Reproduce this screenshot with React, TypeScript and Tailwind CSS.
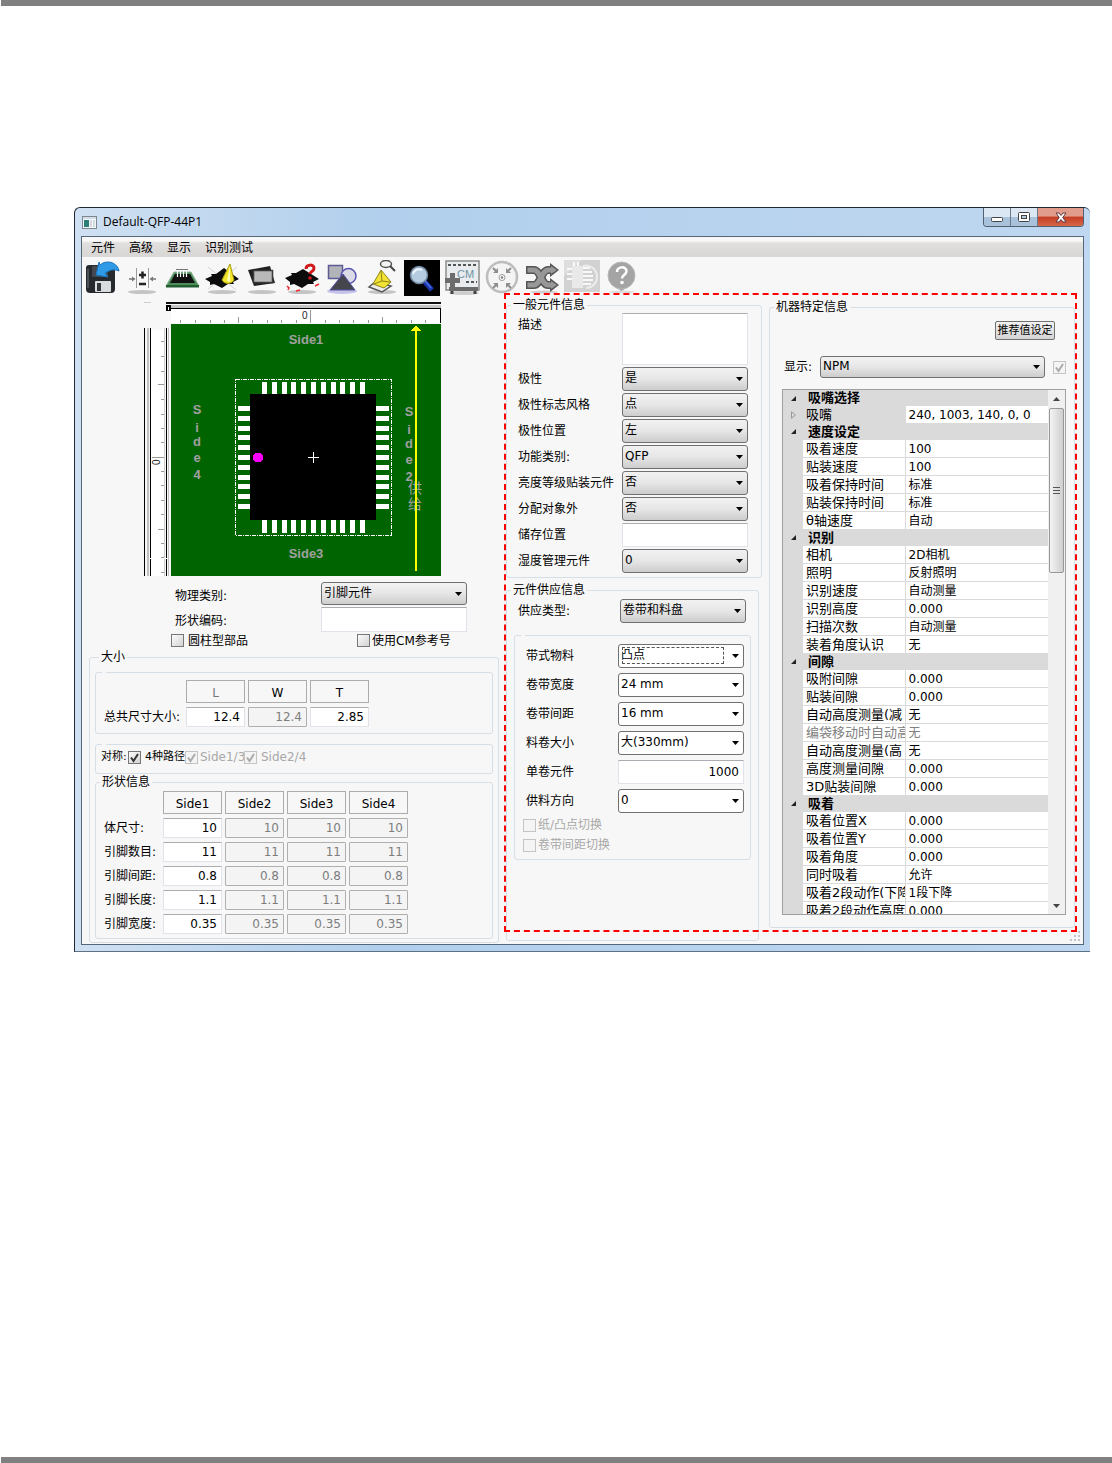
import React from "react";

const FIELD =
  "block border border-t-[#abadb3] border-[#e2e3ea] bg-white outline-none";

function Shadow() {
  return <ellipse cx="18" cy="32" rx="14" ry="2" fill="#c4c4c4" />;
}

const icons: { name: string; art: React.ReactNode }[] = [
  {
    name: "保存",
    art: (
      <>
        <path d="M5 5h22l4 4v20a4 4 0 0 1-4 4H6a4 4 0 0 1-4-4V8a3 3 0 0 1 3-3z" fill="#26292d" />
        <path d="M4 9v19" stroke="#5b6068" strokeWidth="1.5" />
        <rect x="8" y="6" width="16" height="11" rx="1" fill="#45494f" />
        <rect x="11" y="21" width="16" height="11" rx="1" fill="#d9dcdf" />
        <rect x="13" y="23" width="4" height="8" fill="#33373b" />
        <path d="M35 11C34 4 26 0 19 3l-3 2-1-3-3 13 12 2-3-4 4-2c4-2 7-1 10 0z" fill="#2f9be6" stroke="#1874bd" />
      </>
    ),
  },
  {
    name: "尺寸调整",
    art: (
      <>
        <Shadow />
        <path d="M12.5 8v20M24.5 8v20" stroke="#9a9a9a" />
        <path d="M18.500 11.500v7M15 15h7M15 24h7" stroke="#222" strokeWidth="2.500" />
        <path d="M5 19h4M32 19h-4" stroke="#777" strokeWidth="1.500" />
        <path d="M8 16.500l3.500 2.500L8 21.500zM29 16.500L25.500 19l3.500 2.500z" fill="#777" />
      </>
    ),
  },
  {
    name: "基板",
    art: (
      <>
        <path d="M10 12h17l8 14H2z" fill="#4d8f5b" stroke="#8fb596" />
        <path d="M11 14h15l5 9H6z" fill="#111" />
        <path d="M13.500 9v8M16.500 9v8M19.500 9v8M22.500 9v8" stroke="#fff" strokeWidth="1.200" />
        <path d="M12 9.500h12" stroke="#777" />
        <path d="M2 25h33v2.500H2z" fill="#235e31" />
      </>
    ),
  },
  {
    name: "照明",
    art: (
      <>
        <Shadow />
        <path d="M4 7l28 23M33 7L4 29" stroke="#d4d4d4" />
        <path d="M1 19l7-3-1-2 5 0 8-6 15 11-6 3 1 2-6 0-6 4-8-4-4 1 0-3z" fill="#0c0c0c" />
        <path d="M26 4l-8 16c2 4 9 5 12 0z" fill="#f3e52e" stroke="#a99d12" />
        <path d="M26 6l-3 15 3 1z" fill="#fffbbd" />
      </>
    ),
  },
  {
    name: "视图",
    art: (
      <>
        <Shadow />
        <path d="M4 10l22-4 5 17-21 3z" fill="#202020" />
        <path d="M9.500 10.500h19v12h-19z" fill="#b9b9b9" stroke="#3a3a3a" strokeWidth="1.500" />
      </>
    ),
  },
  {
    name: "查询",
    art: (
      <>
        <Shadow />
        <path d="M1 18l7-3-1-2 5 0 7-4 16 10-6 3 1 2-6 0-6 4-8-4-4 1 0-3z" fill="#0c0c0c" />
        <path d="M22 9c0-5 8-5 8-1 0 4-4 3-4 6" stroke="#d01818" strokeWidth="3" fill="none" />
        <circle cx="26" cy="18" r="1.800" fill="#d01818" />
        <path d="M3 26l2 2-1 2M12 31l4-1M31 26l4-2" stroke="#ee2a2a" strokeWidth="1.500" fill="none" />
      </>
    ),
  },
  {
    name: "形状",
    art: (
      <>
        <ellipse cx="18" cy="31" rx="15" ry="3" fill="#c6c3ea" />
        <rect x="4.500" y="5.500" width="14" height="13" fill="#b3b4ba" stroke="#5c5a90" strokeWidth="1.500" />
        <circle cx="24.500" cy="16" r="7.500" fill="#dadbe6" stroke="#5b56b4" strokeWidth="1.500" />
        <path d="M19 14L6 30h25z" fill="#45464d" stroke="#5550a8" />
      </>
    ),
  },
  {
    name: "检查视野",
    art: (
      <>
        <Shadow />
        <path d="M5 27l6-5 16 4-9 6z" fill="#ececec" stroke="#555" strokeWidth="1.500" />
        <path d="M17 10l10 12-7 6-11-4z" fill="#f2e335" stroke="#8e8418" />
        <path d="M17 11l1 10-8 3M18 21l8 1" fill="none" stroke="#8e8418" />
        <ellipse cx="22" cy="4" rx="5.500" ry="3.500" fill="#f4f4f4" stroke="#555" strokeWidth="1.500" />
        <path d="M26 6l5 5" stroke="#444" strokeWidth="2" />
      </>
    ),
  },
  {
    name: "放大镜",
    art: (
      <>
        <rect width="36" height="36" fill="#000" />
        <path d="M20 21l8 9" stroke="#1a34a8" strokeWidth="5" />
        <path d="M21 21l6 7" stroke="#4f74e6" strokeWidth="1.500" />
        <circle cx="15" cy="15" r="8.500" fill="#b5cbe0" stroke="#70849c" strokeWidth="1.500" />
        <path d="M9 14c1-4 5-6 9-4" stroke="#eaf4fc" strokeWidth="2" fill="none" />
      </>
    ),
  },
  {
    name: "CM元件",
    art: (
      <>
        <ellipse cx="20" cy="33" rx="15" ry="2" fill="#cfcfcf" />
        <path d="M2 1h33v29H2z" fill="#e9ecee" stroke="#8c8c8c" strokeWidth="1.500" />
        <path d="M4 5h29M22 22h11" stroke="#555" strokeWidth="2" strokeDasharray="3 2" />
        <path d="M5 27h29v4H5z" fill="#6b6b6b" />
        <path d="M8 31v3M31 31v3" stroke="#444" strokeWidth="3" />
        <text x="13" y="18" fontSize="11" fill="#6f92a8" fontFamily="Liberation Sans">CM</text>
        <path d="M8.500 13v16M1 20.500h15" stroke="#6d6d6d" strokeWidth="5" />
      </>
    ),
  },
  {
    name: "居中",
    art: (
      <>
        <circle cx="18" cy="17" r="15" fill="#f4f4f4" stroke="#bdbdbd" strokeWidth="2.500" />
        <circle cx="18" cy="17.500" r="3" fill="#fff" stroke="#999" />
        <circle cx="18" cy="17.500" r="1.200" fill="#777" />
        <path d="M9 8l4 4M27 8l-4 4M9 28l4-4M27 28l-4-4" stroke="#8d8d8d" strokeWidth="2" />
        <path d="M14 8v5H9zM22 8v5h5zM14 28v-5H9zM22 28v-5h5z" fill="#8d8d8d" />
      </>
    ),
  },
  {
    name: "交换",
    art: (
      <>
        <ellipse cx="20" cy="32" rx="14" ry="1.500" fill="#cfcfcf" />
        <path d="M2 10h8c6 0 8 15 14 15h4M2 25h8c6 0 8-15 14-15h4" stroke="#555" strokeWidth="8" fill="none" />
        <path d="M26 3l9 7-9 7zM26 18l9 7-9 7z" fill="#555" />
        <path d="M3.500 10H10c6 0 8 15 14 15h4M3.500 25H10c6 0 8-15 14-15h4" stroke="#989898" strokeWidth="5" fill="none" />
        <path d="M27 6l6 4-6 4zM27 21l6 4-6 4z" fill="#989898" />
      </>
    ),
  },
  {
    name: "元件编辑",
    art: (
      <>
        <rect width="36" height="32" fill="#d2d2d2" />
        <path d="M0 0h18L0 16z" fill="#dedede" />
        <path d="M19 6a11 11 0 0 1 14 11c0 6-5 11-11 11" fill="none" stroke="#ececec" strokeWidth="2" />
        <path d="M8 6h11v22H8z" fill="#e9e9e9" />
        <path d="M3 9h5M3 14h5M3 19h5M10 2v4M14 2v4" stroke="#f8f8f8" strokeWidth="2" />
        <path d="M19 8h7M19 12h9M19 16h10M19 20h10M19 24h8" stroke="#f8f8f8" strokeWidth="2" />
      </>
    ),
  },
  {
    name: "帮助",
    art: (
      <>
        <ellipse cx="18" cy="32" rx="13" ry="1.500" fill="#dcdcdc" />
        <path d="M17.500 31l-5-3h10z" fill="#a4a4a4" />
        <circle cx="17.500" cy="15.500" r="13.500" fill="#a4a4a4" stroke="#b9b9b9" />
        <path d="M13 12c0-6 9.500-6 9.500-1 0 4-4.500 4-4.500 7.500" stroke="#fff" strokeWidth="2.500" fill="none" />
        <circle cx="18" cy="22.500" r="1.800" fill="#fff" />
      </>
    ),
  },
];

const hTicks = [180, 195, 210, 224, 238, 252, 267, 281, 296, 310, 325, 339, 353, 368, 382, 396, 411, 425];
const vTicks = [341, 356, 371, 384, 399, 414, 428, 442, 457, 471, 485, 500, 514, 529, 543, 557, 572];
const pins = Array.from({ length: 11 }, (_, i) => Math.round(i * 9.8));
const sideLetterRows = [0, 18, 32, 48, 65];

function Preview() {
  return (
    <svg
      viewBox="144 302 297 274"
      className="ml-[55px] block h-[274px] w-[297px]"
      role="img"
      aria-label="元件外形"
      shapeRendering="crispEdges"
    >
      <path d="M144 302h7v1h-7z" fill="#ccc" />
      <path d="M166 302h275v2H166z" fill="#111" />
      <path d="M166 305h275v3H166z" fill="#c4c4c4" />
      <path d="M166 305h5v6h-5z" fill="#000" />
      <path d="M168 307h1v3h-1z" fill="#fff" />
      <path d="M171 308h270v15H171z" fill="#000" />
      <path d="M171 309h269v14H171z" fill="#fff" />
      {hTicks.map((x, i) => (
        <path
          key={x}
          d={`M${x}.5 ${i === 9 ? 310 : i === 4 || i === 14 ? 317 : 320}V323`}
          stroke="#999"
        />
      ))}
      <text x="302" y="319" fontSize="10" fill="#222" fontFamily="Liberation Sans">0</text>
      <path d="M144 328h1v248h-1zM150 328h1v248h-1zM166 328h1v248h-1z" fill="#000" />
      <path d="M147 328h2v248h-2zM168 328h1v248h-1z" fill="#c0c0c0" />
      <path d="M151 330h13v246h-13z" fill="#fff" />
      <path d="M164 328h1v248h-1z" fill="#ccc" />
      <path d="M150 558h17v1h-17z" fill="#fff" />
      {vTicks.map((y, i) => (
        <path
          key={y}
          d={`M${i === 8 ? 152 : i === 3 || i === 13 ? 158 : 161} ${y}.5H164`}
          stroke="#999"
        />
      ))}
      <text x="0" y="0" fontSize="10" fill="#222" fontFamily="Liberation Sans" transform="translate(160 465) rotate(-90)">0</text>
      <rect x="171" y="324" width="270" height="252" fill="#006400" />
      <rect x="235.500" y="379.500" width="156" height="156" fill="none" stroke="#fff" strokeDasharray="4 1 1 1" />
      {pins.map((p) => (
        <g key={p} fill="#fff">
          <rect x={262 + p} y="382" width="5" height="13" />
          <rect x={262 + p} y="519" width="5" height="14" />
          <rect x="238" y={406 + p} width="13" height="5" />
          <rect x="375" y={406 + p} width="14" height="5" />
        </g>
      ))}
      <rect x="250" y="394" width="126" height="126" />
      <circle cx="258" cy="457.500" r="5" fill="#f0f" />
      <path d="M313.500 452v11M308 457.500h11" stroke="#fff" />
      <g fill="#a0a0a0" fontSize="13" fontWeight="700" fontFamily="Liberation Sans" textAnchor="middle">
        <text x="306" y="344">Side1</text>
        <text x="306" y="558">Side3</text>
        {["S", "i", "d", "e", "4"].map((c, i) => (
          <text key={c} x="197" y={414 + sideLetterRows[i]}>{c}</text>
        ))}
        {["S", "i", "d", "e", "2"].map((c, i) => (
          <text key={c} x="409" y={416 + sideLetterRows[i]}>{c}</text>
        ))}
      </g>
      <g fill="#a0a0a0" fontSize="14" fontFamily="Noto Sans CJK SC, sans-serif">
        <text x="408" y="493">供</text>
        <text x="408" y="509">给</text>
      </g>
      <path d="M415 330h2v241h-2zM416 325l5 6h-10z" fill="#ff0" />
    </svg>
  );
}

function Group({ title, className, children }: { title?: string; className?: string; children: React.ReactNode }) {
  return (
    <fieldset className={`min-w-0 rounded-[3px] border border-[#d5dfe5] ${className ?? ""}`}>
      {title ? (
        <legend className="ml-1 px-0.5 text-xs leading-4">{title}</legend>
      ) : (
        <legend className="ml-1.5 h-px w-1" />
      )}
      {children}
    </fieldset>
  );
}

function Select({
  id,
  value,
  light,
  focused,
  className,
}: {
  id: string;
  value: string;
  light?: boolean;
  focused?: boolean;
  className: string;
}) {
  return (
    <div className={`relative ${className}`}>
      <select
        id={id}
        className={`block h-full w-full appearance-none rounded-[3px] border border-[#707070] pb-0.5 pl-0.5 text-xs leading-4 outline-none ${
          light ? "bg-white" : "bg-linear-to-b from-[#f2f2f2] via-[#e6e6e6] to-[#cdcdcd]"
        }`}
      >
        <option>{value}</option>
      </select>
      {focused && (
        <span className="pointer-events-none absolute top-[3px] right-5 bottom-1 left-1 border border-dashed border-[#555]" />
      )}
      <svg viewBox="0 0 7 4" className="pointer-events-none absolute inset-y-0 right-[5px] my-auto h-1 w-[7px]">
        <path d="M0 0h7L3.500 4z" />
      </svg>
    </div>
  );
}

function Check({
  id,
  label,
  checked,
  disabled,
  gap,
  small,
}: {
  id: string;
  label: string;
  checked?: boolean;
  disabled?: boolean;
  gap?: boolean;
  small?: boolean;
}) {
  return (
    <span className="flex items-center">
      <span className="relative block size-[13px] shrink-0">
        <input
          id={id}
          type="checkbox"
          aria-label={label || "启用"}
          defaultChecked={checked}
          disabled={disabled}
          className="block size-[13px] appearance-none border border-[#777] bg-linear-to-br from-[#fdfdfd] to-[#d2d2d2] disabled:border-[#c4c4c4] disabled:bg-[#f4f4f4] disabled:bg-none"
        />
        {checked && (
          <svg viewBox="0 0 13 13" className="pointer-events-none absolute inset-0 size-[13px]">
            <path d="M3 6.500l2.500 3.500L10 3" fill="none" strokeWidth="2" stroke={disabled ? "#aaa" : "#333"} />
          </svg>
        )}
      </span>
      {label && (
        <label
          htmlFor={id}
          className={`${gap ? "ml-1" : "ml-0.5"} ${small ? "text-[11px]" : ""} whitespace-nowrap ${disabled ? "text-[#a8a8a8]" : ""}`}
        >
          {label}
        </label>
      )}
    </span>
  );
}

function NumberCell({ value, disabled, label }: { value: string; disabled?: boolean; label: string }) {
  return (
    <td className="p-0">
      <input
        aria-label={label}
        defaultValue={value}
        disabled={disabled}
        className={`${FIELD} h-5 w-[59px] pr-1 text-right text-xs disabled:rounded-[1px] disabled:border-[#afafaf] disabled:bg-[#f4f4f4] disabled:text-[#7d7d7d]`}
      />
    </td>
  );
}

function HeadCell({ text, muted }: { text: string; muted?: boolean }) {
  return (
    <th scope="col" className="p-0 font-normal">
      <div className={`h-[23px] w-[59px] border border-[#acacac] leading-6 ${muted ? "text-[#777]" : ""}`}>{text}</div>
    </th>
  );
}

const shapeRows = [
  ["体尺寸:", "10"],
  ["引脚数目:", "11"],
  ["引脚间距:", "0.8"],
  ["引脚长度:", "1.1"],
  ["引脚宽度:", "0.35"],
];
const sides = ["Side1", "Side2", "Side3", "Side4"];

function LeftColumn() {
  return (
    <div className="w-[422px] shrink-0 pt-[5px] pr-[5px] pb-px pl-[7px]">
      <Preview />
      <div className="mt-1.5 ml-[86px] grid grid-cols-[146px_146px] items-center gap-y-0.5">
        <label htmlFor="phys" className="pt-1">物理类别:</label>
        <Select id="phys" value="引脚元件" className="h-[23px]" />
        <label htmlFor="code" className="pt-0.5">形状编码:</label>
        <input id="code" className={`${FIELD} h-[25px] w-full`} />
      </div>
      <div className="ml-[82px] grid h-[17px] grid-cols-[186px_auto] items-center">
        <Check id="cyl" label="圆柱型部品" gap />
        <Check id="cm" label="使用CM参考号" />
      </div>
      <Group title="大小" className="px-[5px] pb-[3px]">
        <Group className="mt-[7px] pb-0.5">
          <table className="border-separate border-spacing-x-[3px] border-spacing-y-1 pt-[3px]">
            <thead>
              <tr>
                <td />
                <HeadCell text="L" muted />
                <HeadCell text="W" />
                <HeadCell text="T" />
              </tr>
            </thead>
            <tbody>
              <tr>
                <th scope="row" className="w-[84px] p-0 pl-[5px] text-left font-normal whitespace-nowrap">总共尺寸大小:</th>
                <NumberCell label="L" value="12.4" />
                <NumberCell label="W" value="12.4" disabled />
                <NumberCell label="T" value="2.85" />
              </tr>
            </tbody>
          </table>
        </Group>
        <Group className="mt-2.5">
          <div className="flex h-7 items-center pb-1 pl-[5px]">
            <span className="w-[27px] shrink-0 text-[11px] whitespace-nowrap">对称:</span>
            <span className="w-[57px]"><Check id="p4" label="4种路径" checked gap small /></span>
            <span className="w-[59px]"><Check id="s13" label="Side1/3" checked disabled /></span>
            <Check id="s24" label="Side2/4" checked disabled gap />
          </div>
        </Group>
        <Group title="形状信息">
          <table className="-mt-[3px] border-separate border-spacing-x-[3px] border-spacing-y-1">
            <thead>
              <tr>
                <td />
                {sides.map((s) => <HeadCell key={s} text={s} />)}
              </tr>
            </thead>
            <tbody>
              {shapeRows.map(([name, value]) => (
                <tr key={name}>
                  <th scope="row" className="w-[61px] p-0 pl-[5px] text-left font-normal whitespace-nowrap">{name}</th>
                  {sides.map((s, i) => (
                    <NumberCell key={s} label={name + s} value={value} disabled={i > 0} />
                  ))}
                </tr>
              ))}
            </tbody>
          </table>
        </Group>
      </Group>
    </div>
  );
}

const general = [
  ["极性", "是"],
  ["极性标志风格", "点"],
  ["极性位置", "左"],
  ["功能类别:", "QFP"],
  ["亮度等级贴装元件", "否"],
  ["分配对象外", "否"],
  ["储存位置", null],
  ["湿度管理元件", "0"],
] as const;

function MiddleColumn() {
  return (
    <div className="w-64 shrink-0">
      <Group title="一般元件信息" className="pb-1">
        <div className="grid grid-cols-[104px_126px] items-center gap-y-0.5 pl-[11px]">
          <label htmlFor="desc" className="self-start pt-1">描述</label>
          <textarea id="desc" className={`${FIELD} h-[52px] w-full resize-none`} />
          {general.map(([name, value]) => (
            <React.Fragment key={name}>
              <label htmlFor={name} className="whitespace-nowrap">{name}</label>
              {value === null ? (
                <input id={name} className={`${FIELD} h-6 w-full`} />
              ) : (
                <Select id={name} value={value} className="h-6" />
              )}
            </React.Fragment>
          ))}
        </div>
      </Group>
      <Group title="元件供应信息" className="mt-1 mr-[3px] h-[359px]">
        <div className="grid grid-cols-[102px_126px] items-center pt-px pl-[11px]">
          <label htmlFor="supply">供应类型:</label>
          <Select id="supply" value="卷带和料盘" className="h-6" />
        </div>
        <Group className="mt-3 mr-[7px] ml-[7px] pb-1">
          <div className="grid grid-cols-[92px_126px] items-center gap-y-[5px] pt-2 pl-[11px]">
            <label htmlFor="tape">带式物料</label>
            <Select id="tape" value="凸点" light focused className="h-6" />
            <label htmlFor="tapew">卷带宽度</label>
            <Select id="tapew" value="24 mm" light className="h-6" />
            <label htmlFor="tapep">卷带间距</label>
            <Select id="tapep" value="16 mm" light className="h-6" />
            <label htmlFor="reel">料卷大小</label>
            <Select id="reel" value="大(330mm)" light className="h-6" />
            <label htmlFor="parts">单卷元件</label>
            <input id="parts" defaultValue="1000" className={`${FIELD} h-6 w-full pr-1 text-right`} />
            <label htmlFor="dir">供料方向</label>
            <Select id="dir" value="0" light className="h-6" />
          </div>
          <div className="grid auto-rows-[20px] items-center pt-0.5 pl-2">
            <Check id="paper" label="纸/凸点切换" disabled />
            <Check id="pitch" label="卷带间距切换" disabled />
          </div>
        </Group>
      </Group>
    </div>
  );
}

type Row = [string, string?, ("muted" | "closed")?];
const rows: Row[] = [
  ["吸嘴选择"],
  ["吸嘴", "240, 1003, 140, 0, 0", "closed"],
  ["速度设定"],
  ["吸着速度", "100"],
  ["贴装速度", "100"],
  ["吸着保持时间", "标准"],
  ["贴装保持时间", "标准"],
  ["θ轴速度", "自动"],
  ["识别"],
  ["相机", "2D相机"],
  ["照明", "反射照明"],
  ["识别速度", "自动测量"],
  ["识别高度", "0.000"],
  ["扫描次数", "自动测量"],
  ["装着角度认识", "无"],
  ["间隙"],
  ["吸附间隙", "0.000"],
  ["贴装间隙", "0.000"],
  ["自动高度测量(减", "无"],
  ["编袋移动时自动高", "无", "muted"],
  ["自动高度测量(高", "无"],
  ["高度测量间隙", "0.000"],
  ["3D贴装间隙", "0.000"],
  ["吸着"],
  ["吸着位置X", "0.000"],
  ["吸着位置Y", "0.000"],
  ["吸着角度", "0.000"],
  ["同时吸着", "允许"],
  ["吸着2段动作(下降", "1段下降"],
  ["吸着2段动作高度", "0.000"],
];

function PropertyGrid() {
  return (
    <div className="mt-[11px] mr-2 ml-3 flex h-[526px] overflow-hidden border border-[#a0a0a0] bg-white">
      <div className="min-w-0 flex-1 overflow-hidden">
        <table className="h-[530px] w-full table-fixed border-collapse text-xs leading-4">
          <colgroup>
            <col className="w-5" />
            <col className="w-[102px]" />
            <col />
          </colgroup>
          <tbody>
            {rows.map(([name, value, kind], i) => (
              <tr key={i}>
                <td className="bg-[#dadada] p-0 pl-2">
                  {value === undefined && (
                    <svg viewBox="0 0 5 5" className="block size-[5px]"><path d="M5 0v5H0z" fill="#222" /></svg>
                  )}
                  {kind === "closed" && (
                    <svg viewBox="0 0 5 8" className="block h-2 w-[5px]"><path d="M.5 .8L4.500 4 .5 7.200z" fill="none" stroke="#999" /></svg>
                  )}
                </td>
                {value === undefined ? (
                  <th colSpan={2} scope="colgroup" className="bg-[#dadada] p-0 pl-[5px] text-left text-[13px] font-bold">{name}</th>
                ) : (
                  <>
                    <th
                      scope="row"
                      className={`border-r border-b border-[#dadada] p-0 pl-[3px] text-left text-[13px] font-normal ${
                        kind === "closed" ? "bg-[#dadada]" : ""
                      } ${kind === "muted" ? "text-[#808080]" : ""}`}
                    >
                      <div className="overflow-hidden whitespace-nowrap">{name}</div>
                    </th>
                    <td className={`border-b border-[#dadada] p-0 pt-px pl-[3px] whitespace-nowrap ${kind === "muted" ? "text-[#808080]" : ""}`}>
                      {value}
                    </td>
                  </>
                )}
              </tr>
            ))}
          </tbody>
        </table>
      </div>
      <div className="flex w-[17px] shrink-0 flex-col bg-[#f0f0f0]">
        <button aria-label="向上" className="grid h-[18px] place-items-center">
          <svg viewBox="0 0 7 4" className="h-1 w-[7px]"><path d="M0 4h7L3.500 0z" fill="#444" /></svg>
        </button>
        <div className="mx-px grid h-[165px] place-items-center rounded-[2px] border border-[#979797] bg-linear-to-r from-[#f4f4f4] to-[#cfcfcf]">
          <svg viewBox="0 0 7 8" className="h-2 w-[7px]"><path d="M0 .5h7M0 3.500h7M0 6.500h7" stroke="#555" /></svg>
        </div>
        <button aria-label="向下" className="mt-auto grid h-[17px] place-items-center">
          <svg viewBox="0 0 7 4" className="h-1 w-[7px]"><path d="M0 0h7L3.500 4z" fill="#444" /></svg>
        </button>
      </div>
    </div>
  );
}

function RightColumn() {
  return (
    <div className="mr-2 ml-[7px] min-w-0 flex-1 pt-0.5">
      <Group title="机器特定信息" className="pb-3">
        <div className="mr-[19px] flex justify-end pt-1.5">
          <button className="h-[19px] w-[60px] rounded-[2px] border border-[#707070] bg-linear-to-b from-[#f2f2f2] to-[#d4d4d4] text-[11px] leading-4 whitespace-nowrap">
            推荐值设定
          </button>
        </div>
        <div className="mt-4 mr-2 ml-3.5 flex items-center">
          <label htmlFor="show" className="w-9 shrink-0 whitespace-nowrap">显示:</label>
          <Select id="show" value="NPM" className="mr-2 h-[22px] flex-1 pb-0" />
          <Check id="enable" label="" checked disabled />
        </div>
        <PropertyGrid />
      </Group>
    </div>
  );
}

function TitleBar() {
  return (
    <header className="flex h-7 items-start justify-between">
      <div className="flex h-full items-center pl-[1px]">
        <svg viewBox="0 0 15 13" className="h-[13px] w-[15px]">
          <rect x=".5" y=".5" width="14" height="12" fill="#f4f7fa" stroke="#7d8790" />
          <path d="M1 1h13v2H1z" fill="#d4dde6" />
          <path d="M2 4h5v7H2z" fill="#2c7f78" />
          <path d="M8 4h2v7H8zM11 4h2v7h-2z" fill="#d4dbe0" />
        </svg>
        <h1 className="ml-1.5 font-['Open_Sans',sans-serif] text-xs">Default-QFP-44P1</h1>
      </div>
      <div className="flex h-[19px] overflow-hidden rounded-b-[4px] border border-t-0 border-[#53606e]">
        <button aria-label="最小化" className="grid w-[27px] place-items-center border-r border-[#6c7b8a] bg-linear-to-b from-[#dbe7f3] from-50% to-[#a9c2dc] to-50%">
          <svg viewBox="0 0 12 12" className="size-3"><rect x=".5" y="6.500" width="11" height="4" rx="1" fill="#fff" stroke="#444" /></svg>
        </button>
        <button aria-label="最大化" className="grid w-[27px] place-items-center border-r border-[#6c7b8a] bg-linear-to-b from-[#dbe7f3] from-50% to-[#a9c2dc] to-50%">
          <svg viewBox="0 0 12 12" className="size-3"><rect x=".5" y="1.500" width="11" height="9" rx="1" fill="#fff" stroke="#444" /><rect x="3.500" y="4.500" width="5" height="3" fill="#b7cbe0" stroke="#444" /></svg>
        </button>
        <button aria-label="关闭" className="grid w-[45px] place-items-center bg-linear-to-b from-[#e29c8b] from-45% via-[#c53b22] via-50% to-[#d5674a]">
          <svg viewBox="0 0 12 11" className="h-[11px] w-3"><path d="M1 1h3l2 2.500L8 1h3L7.800 5.500 11 10H8L6 7.500 4 10H1l3.200-4.500z" fill="#fff" stroke="#5c3a40" /></svg>
        </button>
      </div>
    </header>
  );
}

export default function App() {
  return (
    <div className="flex min-h-screen flex-col bg-white font-['DejaVu_Sans','Noto_Sans_CJK_SC',sans-serif] text-xs leading-4 text-black">
      <div className="ml-px h-1.5 shrink-0 bg-[#808080]" />
      <main className="mt-[201px] mr-[22px] mb-auto ml-[74px]">
        <section className="rounded-t-md border-t border-b border-l border-[#1f2a36] border-b-[#5d7186] bg-linear-to-r from-[#cfe0f2] via-[#b1cfec] via-30% to-[#bfd7f0] px-1.5 pb-1.5">
          <TitleBar />
          <div className="relative border border-[#566779] bg-[#f7f7f7]">
            <nav className="flex h-5 items-center gap-3.5 bg-linear-to-b from-[#f7f7f7] from-20% via-[#e2e0de] via-30% to-[#dad8d6] to-85% pl-[9px] font-['Noto_Sans_CJK_SC',sans-serif]">
              {["元件", "高级", "显示", "识别测试"].map((m) => (
                <button key={m} className="leading-5">{m}</button>
              ))}
            </nav>
            <div className="flex h-10 pt-[3px]" role="toolbar">
              {icons.map(({ name, art }) => (
                <button key={name} aria-label={name} className="flex h-9 w-10 shrink-0 justify-center">
                  <svg viewBox="0 0 36 36" className="size-9">{art}</svg>
                </button>
              ))}
            </div>
            <div className="flex">
              <LeftColumn />
              <div className="relative flex min-w-0 flex-1 pl-0.5">
                <MiddleColumn />
                <RightColumn />
                <div className="pointer-events-none absolute -top-1 right-1.5 bottom-3 left-0 border-2 border-dashed border-[#f00]" />
              </div>
            </div>
            <svg viewBox="0 0 12 12" className="absolute right-0.5 bottom-0.5 size-3">
              <path d="M9 1h2v2H9zM9 5h2v2H9zM9 9h2v2H9zM5 5h2v2H5zM5 9h2v2H5zM1 9h2v2H1z" fill="#bcc4d0" />
            </svg>
          </div>
        </section>
      </main>
      <div className="ml-px h-1.5 shrink-0 bg-[#808080]" />
    </div>
  );
}
